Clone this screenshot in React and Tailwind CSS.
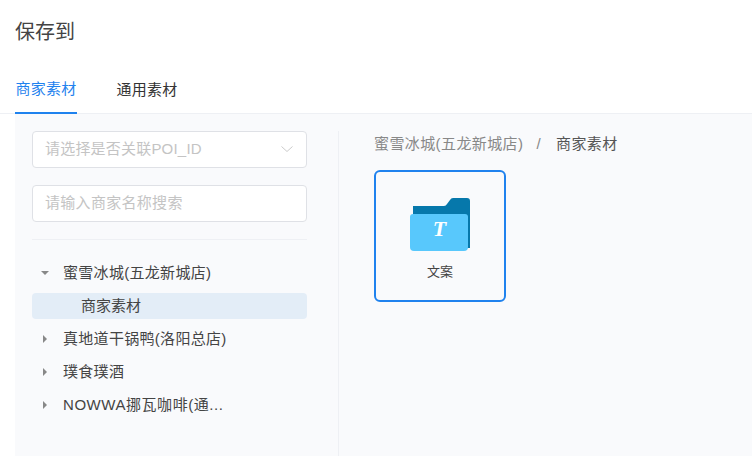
const sans = '"Liberation Sans", "Noto Sans CJK SC", sans-serif';

const TreeArrow = ({ open }) => (
  <svg width="8" height="8" viewBox="0 0 8 8" className="shrink-0 -mt-px">
    {open ? <path d="M0 2h8L4 6z" fill="#888" /> : <path d="M2 0v8l4-4z" fill="#888" />}
  </svg>
);

const TreeRow = ({ label, open, wide }) => (
  <div className={`h-[33px] flex items-center pl-[9px] gap-[14px] text-[15px] text-[#444] ${wide ? "tracking-[0.55px]" : "tracking-[0.3px]"}`}>
    <TreeArrow open={open} />
    <span className="pb-[1px]">{label}</span>
  </div>
);

const FolderIcon = () => (
  <svg width="60" height="53" viewBox="0 0 60 53">
    <path d="M3 8h31q2 0 3-2l3-4q1-2 3-2h14q3 0 3 3v47H3z" fill="#0678ab" />
    <path d="M0 19q0-3 3-3h52q3 0 3 3v30q0 4-4 4H4q-4 0-4-4z" fill="#58c8fc" />
    <text x="29.5" y="38" textAnchor="middle" fontSize="22" fontWeight="700" fontStyle="italic" fill="#fff" fontFamily='"Liberation Serif", serif'>T</text>
  </svg>
);

export default function App() {
  return (
    <div className="w-[752px] h-[456px] bg-white overflow-hidden flex flex-col" style={{ fontFamily: sans }}>
      <div className="h-[60px] pl-[15px] pt-[19px] text-[20px] leading-[26px] text-[#444]">保存到</div>
      <div className="h-[54px] flex items-stretch pl-[15px] gap-[39px] border-b border-[#eef0f4] text-[15px] tracking-[0.3px]">
        <div className="w-[62px] flex items-center justify-center pt-[7px] text-[#1f82ee] border-b-2 border-[#1f82ee] -mb-px">商家素材</div>
        <div className="w-[62px] flex items-center justify-center pt-[7px] text-[#333]">通用素材</div>
      </div>
      <div className="flex-1 ml-[15px] bg-[#f9fafc] flex pt-[17px]">
        <div className="w-[324px] pl-[17px] pr-[31px] border-r border-[#eef0f4]">
          <div className="h-[37px] flex items-center justify-between px-[12px] pb-[1px] bg-white border border-[#dfe1e6] rounded text-[15px] tracking-[0.2px] text-[#c4c4c4]">
            <span>请选择是否关联POI_ID</span>
            <svg width="14" height="14" viewBox="0 0 14 14" fill="none" stroke="#ccc" strokeWidth="1"><path d="M1.5 4.5 7 9.5l5.5-5" /></svg>
          </div>
          <div className="h-[37px] mt-[17px] flex items-center px-[12px] pb-[1px] bg-white border border-[#dfe1e6] rounded text-[15px] tracking-[0.3px] text-[#c4c4c4]">请输入商家名称搜索</div>
          <div className="mt-[17px] border-t border-[#eef0f4] pt-[17px]">
            <TreeRow label="蜜雪冰城(五龙新城店)" open />
            <div className="h-[33px] flex items-center pb-[1px]">
              <div className="w-full h-[26px] flex items-center pl-[49px] bg-[#e3edf7] rounded-sm text-[15px] text-[#444]">商家素材</div>
            </div>
            <TreeRow label="真地道干锅鸭(洛阳总店)" />
            <TreeRow label="璞食璞酒" />
            <TreeRow label="NOWWA挪瓦咖啡(通..." wide />
          </div>
        </div>
        <div className="pl-[35px]">
          <div className="flex text-[15px] tracking-[0.4px] leading-[28px] -mt-[1px] text-[#888]">
            <span>蜜雪冰城(五龙新城店)</span>
            <span className="ml-[13px] mr-[15px]">/</span>
            <span className="text-[#555]">商家素材</span>
          </div>
          <div className="mt-[12px] w-[132px] h-[132px] border-2 border-[#1f82ee] rounded-md flex flex-col items-center pt-[26px]">
            <FolderIcon />
            <span className="mt-[11px] text-[13px] text-[#444]">文案</span>
          </div>
        </div>
      </div>
    </div>
  );
}
